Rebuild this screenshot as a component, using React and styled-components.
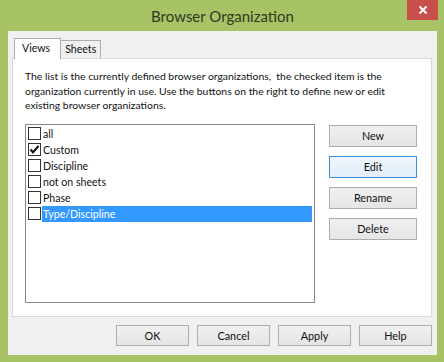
import React, {useState} from 'react';
import styled, {createGlobalStyle} from 'styled-components';

const Global = createGlobalStyle`
html, body { margin:0; padding:0; }
body { font-family:Lato,"Noto Sans",sans-serif; }
`;

const Window = styled.div`
width:444px;
height:362px;
background:#a8c266;
display:flex;
flex-direction:column;
box-sizing:border-box;
padding:0 7px 7px 8px;
`;
const TitleBar = styled.div`
height:31px;
display:flex;
align-items:center;
justify-content:center;
position:relative;
font-size:15px;
color:#2f3a20;
`;
const CloseButton = styled.div`
position:absolute;
top:0;
right:-1px;
width:31px;
height:20px;
background:#c84f4b;
color:white;
display:flex;
align-items:center;
justify-content:center;
`;
const Client = styled.div`
flex:1;
background:#f0f0f0;
display:flex;
flex-direction:column;
padding:7px 5px 0 4px;
`;
const TabRow = styled.div`
display:flex;
align-items:flex-end;
height:20px;
padding-left:2px;
`;
const Tab = styled.div`
box-sizing:border-box;
font-size:10.6px;
color:#111;
border:1px solid #adadad;
border-bottom:none;
height:${p => p.active ? '21px' : '18px'};
margin-bottom:${p => p.active ? '-1px' : '0'};
background:${p => p.active ? '#fff' : '#f0f0f0'};
padding:${p => p.active ? '3px 10px 0 7px' : '2px 4px 0 4px'};
margin-left:${p => p.active ? '0' : '-1px'};
position:relative;
z-index:${p => p.active ? 1 : 0};
`;
const Panel = styled.div`
height:259px;
background:#fff;
border:1px solid #d9d9d9;
padding:10px 12px 0 12px;
box-sizing:border-box;
`;
const Description = styled.div`
font-size:10.4px;
line-height:14.5px;
color:#111;
`;
const Body = styled.div`
display:flex;
gap:14px;
margin-top:11px;
`;
const ListBox = styled.div`
width:290px;
height:179px;
box-sizing:border-box;
border:1px solid #828790;
padding:1px 2px;
`;
const Item = styled.div`
display:flex;
align-items:center;
height:16px;
font-size:10.6px;
color:#111;
`;
const Check = styled.div`
width:13px;
height:13px;
box-sizing:border-box;
border:1px solid #333;
background:#fff;
display:flex;
align-items:center;
justify-content:center;
margin-right:1px;
`;
const Label = styled.div`
flex:1;
height:16px;
line-height:16px;
padding-left:1px;
background:${p => p.selected ? '#3399ff' : 'transparent'};
color:${p => p.selected ? '#fff' : '#111'};
`;
const ButtonColumn = styled.div`
display:flex;
flex-direction:column;
gap:9px;
padding-top:1px;
`;
const Button = styled.div`
box-sizing:border-box;
width:${p => p.w || 88}px;
height:${p => p.h || 22}px;
border:1px solid ${p => p.focus ? '#3c8ee0' : '#adadad'};
background:${p => p.focus ? 'linear-gradient(#eef5fc,#e3effb)' : 'linear-gradient(#f0f0f0,#e5e5e5)'};
display:flex;
align-items:center;
justify-content:center;
font-size:10.8px;
color:#111;
`;
const Footer = styled.div`
display:flex;
justify-content:flex-end;
gap:8px;
margin-top:8px;
`;

const items = ['all', 'Custom', 'Discipline', 'not on sheets', 'Phase', 'Type/Discipline'];

export default function App() {
  const [checked] = useState('Custom');
  const [selected] = useState('Type/Discipline');
  return (
    <Window>
      <Global />
      <TitleBar>
        Browser Organization
        <CloseButton>
          <svg width="10" height="10" viewBox="0 0 10 10">
            <path d="M1.5 1.5 L8.5 8.5 M8.5 1.5 L1.5 8.5" stroke="#fff" strokeWidth="2" />
          </svg>
        </CloseButton>
      </TitleBar>
      <Client>
        <TabRow>
          <Tab active>Views</Tab>
          <Tab>Sheets</Tab>
        </TabRow>
        <Panel>
          <Description>
            The list is the currently defined browser organizations,&nbsp; the checked item is the organization currently in use. Use the buttons on the right to define new or edit existing browser organizations.
          </Description>
          <Body>
            <ListBox>
              {items.map(name => (
                <Item key={name}>
                  <Check>
                    {checked === name && (
                      <svg width="11" height="11" viewBox="0 0 11 11">
                        <path d="M1.5 5.5 L4 8.5 L9.5 2" stroke="#111" strokeWidth="2" fill="none" />
                      </svg>
                    )}
                  </Check>
                  <Label selected={selected === name}>{name}</Label>
                </Item>
              ))}
            </ListBox>
            <ButtonColumn>
              <Button>New</Button>
              <Button focus>Edit</Button>
              <Button>Rename</Button>
              <Button>Delete</Button>
            </ButtonColumn>
          </Body>
        </Panel>
        <Footer>
          <Button w={73} h={21}>OK</Button>
          <Button w={73} h={21}>Cancel</Button>
          <Button w={73} h={21}>Apply</Button>
          <Button w={73} h={21}>Help</Button>
        </Footer>
      </Client>
    </Window>
  );
}
